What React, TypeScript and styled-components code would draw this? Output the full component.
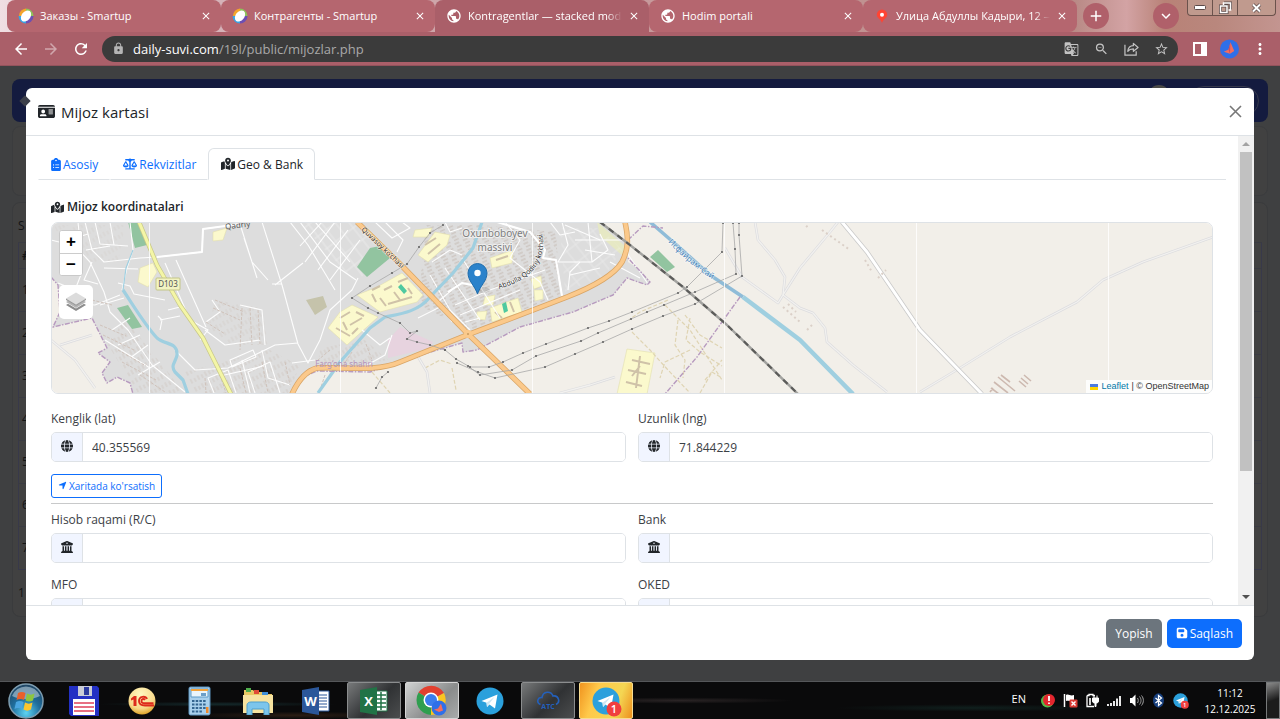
import React from "react";
import styled, { createGlobalStyle, css } from "styled-components";
import {
  FaIdCard,
  FaClipboardList,
  FaScaleBalanced,
  FaMapLocationDot,
  FaGlobe,
  FaBuildingColumns,
  FaLocationArrow,
  FaFloppyDisk,
} from "react-icons/fa6";
import {
  MdArrowBack,
  MdArrowForward,
  MdRefresh,
  MdLock,
  MdGTranslate,
  MdZoomOut,
  MdStarBorder,
  MdMoreVert,
  MdPublic,
  MdClose,
  MdAdd,
  MdExpandMore,
} from "react-icons/md";

const GlobalStyle = createGlobalStyle`
  * { box-sizing: border-box; }
  html, body { margin: 0; padding: 0; }
  body {
    font-family: "Open Sans", "Noto Sans", sans-serif;
    font-size: 12px;
    color: #212529;
    overflow: hidden;
  }
  button, input { font-family: inherit; }
`;

const Screen = styled.div`
  display: flex;
  flex-direction: column;
  height: 100vh;
  background: #404142;
`;

/* ---------- browser chrome ---------- */

const TabStrip = styled.div`
  display: flex;
  align-items: stretch;
  height: 32px;
  padding-left: 7px;
  background: linear-gradient(90deg, #f0dfe3 0, #d9b9c0 8%, #c79a9c 50%, #b98a86 84%, #d3a3a4 88%, #b88277 91%, #b9877d 95%, #c39590 100%);
`;

const BrowserTab = styled.div<{ $active?: boolean }>`
  display: flex;
  align-items: center;
  gap: 6px;
  flex: 0 1 214px;
  min-width: 0;
  padding: 0 9px 0 11px;
  border-radius: ${(p) => (p.$active ? "8px 8px 0 0" : "8px")};
  background: ${(p) => (p.$active ? "#aa5f69" : "#b5666f")};
  color: #fff;
`;

const TabTitle = styled.span<{ $fade?: boolean }>`
  flex: 1;
  min-width: 0;
  overflow: hidden;
  white-space: nowrap;
  font-size: 11px;
  line-height: 16px;
  ${(p) =>
    p.$fade &&
    css`
      mask-image: linear-gradient(90deg, #000 90%, transparent 100%);
    `}
`;

const GlyphButton = styled.button`
  display: flex;
  align-items: center;
  justify-content: center;
  padding: 0;
  border: 0;
  background: none;
  color: inherit;
  font-size: 12px;
`;

const RoundButton = styled(GlyphButton)`
  width: 26px;
  height: 26px;
  margin: 3px 0 0 6px;
  border-radius: 50%;
  background: #b0606a;
  color: #fff;
  font-size: 18px;
`;

const StripEnd = styled.div`
  display: flex;
  flex: 1;
  justify-content: flex-end;
  gap: 8px;
  padding-right: 4px;
`;

const WindowControls = styled.div`
  display: grid;
  grid-template-columns: 24px 25px 38px;
  height: 16px;
  border: 1px solid #6b524c;
  border-top: 0;
  border-radius: 0 0 4px 4px;
  background: #c09a8e;
  overflow: hidden;
  button + button { border-left: 1px solid #6b524c; }
`;

const Toolbar = styled.div`
  display: flex;
  align-items: center;
  height: 34px;
  padding: 0 11px 0 12px;
  background: #aa5f69;
  border-bottom: 1px solid #93535c;
`;

const NavButton = styled(GlyphButton)<{ $dim?: boolean }>`
  width: 18px;
  margin-right: 12px;
  font-size: 18px;
  color: #fff;
  opacity: ${(p) => (p.$dim ? 0.45 : 1)};
`;

const Omnibox = styled.div`
  display: flex;
  align-items: center;
  flex: 1;
  height: 26px;
  padding: 0 9px 0 10px;
  border-radius: 13px;
  background: #3b3b3b;
  color: #b4b4b4;
`;

const UrlText = styled.span`
  flex: 1;
  margin-left: 8px;
  color: #a9a9a9;
  font-size: 13px;
  line-height: 18px;
  b { font-weight: 400; color: #fff; }
`;

const OmniActions = styled.div`
  display: flex;
  gap: 15px;
  color: #c3c3c3;
  button { font-size: 16px; width: 15px; }
`;

const ToolbarEnd = styled.div`
  display: flex;
  align-items: center;
  gap: 11px;
  margin-left: 12px;
  color: #fff;
  button { font-size: 18px; width: 19px; }
`;

/* ---------- page below the dialog ---------- */

const Viewport = styled.main`
  display: grid;
  grid-template: minmax(0, 1fr) / minmax(0, 1fr);
  flex: 1;
  min-height: 0;
  > * { grid-area: 1 / 1; }
`;

const Underlay = styled.div`
  padding: 13px 12px 0;
  overflow: hidden;
  background: #3f4041;
  color: #131415;
`;

const Navbar = styled.div`
  display: flex;
  justify-content: flex-end;
  align-items: center;
  gap: 19px;
  height: 43px;
  padding: 0 9px;
  border-radius: 8px;
  background: #141b3f;
`;

const NavMark = styled.i`
  width: 8px;
  height: 8px;
  margin-right: auto;
  background: #3c3f4a;
  transform: rotate(45deg);
`;

const NavAvatar = styled.i`
  width: 22px;
  height: 32px;
  border-radius: 11px;
  background: #4a4a48;
`;

const NavPill = styled.i`
  width: 70px;
  height: 30px;
  border: 1px solid #35384c;
  border-radius: 15px;
`;

const FilterCard = styled.div`
  height: 70px;
  margin-top: 4px;
  border: 1px solid #3b3c3e;
  border-radius: 8px;
  background: #414141;
`;

const ListCard = styled.div`
  margin-top: 6px;
  padding: 14px 5px;
  border: 1px solid #3a3b3d;
  border-radius: 8px;
  background: #414141;
  line-height: 18px;
`;

const ListTable = styled.table`
  width: 100%;
  margin: 7px 0 14px;
  border-collapse: collapse;
  border: 1px solid #38394a;
  th, td {
    height: 43px;
    padding: 0 0 0 3px;
    border-top: 1px solid #3a3b42;
    text-align: left;
    font-size: 12px;
  }
  th { height: 26px; }
`;

/* ---------- dialog ---------- */

const Dialog = styled.section`
  display: flex;
  flex-direction: column;
  min-height: 0;
  margin: 22px 26px 21px;
  border-radius: 6px;
  background: #fff;
  overflow: hidden;
`;

const DialogHeader = styled.header`
  display: flex;
  align-items: center;
  justify-content: space-between;
  flex: none;
  height: 48px;
  padding: 0 12px;
  border-bottom: 1px solid #dee2e6;
`;

const DialogTitle = styled.h1`
  display: flex;
  align-items: center;
  gap: 6px;
  margin: 0;
  font-size: 15px;
  line-height: 20px;
  font-weight: 400;
  svg { font-size: 17px; }
`;

const CloseButton = styled(GlyphButton)`
  width: 13px;
  height: 13px;
  color: #777;
`;

const DialogBody = styled.div`
  display: flex;
  flex: 1;
  min-height: 0;
`;

const ScrollArea = styled.div`
  flex: 1;
  min-width: 0;
  padding: 12px 12px 0;
  overflow-y: auto;
  scrollbar-width: none;
`;

const ScrollTrack = styled.div`
  display: flex;
  flex-direction: column;
  align-items: center;
  width: 16px;
  background: #f1f1f1;
`;

const ScrollArrow = styled.i<{ $down?: boolean }>`
  display: flex;
  align-items: center;
  justify-content: center;
  flex: none;
  height: 16px;
  &::before {
    content: "";
    border: 4px solid transparent;
    border-top-width: ${(p) => (p.$down ? "4px" : "0")};
    border-bottom-width: ${(p) => (p.$down ? "0" : "4px")};
    border-${(p) => (p.$down ? "top" : "bottom")}-color: ${(p) => (p.$down ? "#505050" : "#a3a3a3")};
  }
`;

const ScrollRail = styled.div`
  flex: 1;
  width: 12px;
  &::before {
    content: "";
    display: block;
    height: 73%;
    background: #c1c1c1;
  }
`;

const Tabs = styled.div`
  display: flex;
  height: 32px;
  border-bottom: 1px solid #dee2e6;
`;

const TabButton = styled.button<{ $active?: boolean }>`
  display: flex;
  align-items: center;
  gap: 2px;
  height: 32px;
  padding: 0 11px 0 12px;
  border: 1px solid ${(p) => (p.$active ? "#dee2e6" : "transparent")};
  border-bottom-color: ${(p) => (p.$active ? "#fff" : "#dee2e6")};
  border-radius: 6px 6px 0 0;
  background: #fff;
  color: ${(p) => (p.$active ? "#212529" : "#0d6efd")};
  font-size: 12px;
`;

const ClipboardIcon = styled(FaClipboardList)`
  width: 10px;
  height: 13px;
`;

const Pane = styled.div`
  padding: 18px 13px 24px;
`;

const SectionTitle = styled.h2`
  display: flex;
  align-items: center;
  gap: 3px;
  margin: 0 0 6px;
  font-size: 12px;
  line-height: 18px;
  font-weight: 600;
`;

const MapBox = styled.div`
  display: grid;
  height: 172px;
  border: 1px solid #dee2e6;
  border-radius: 7px;
  overflow: hidden;
  > * { grid-area: 1 / 1; }
`;

const MapCanvas = styled.svg`
  display: block;
  width: 100%;
  height: 170px;
  text { font-family: "Noto Sans", sans-serif; }
`;

const MapControls = styled.div`
  position: relative;
  display: flex;
  flex-direction: column;
  align-items: flex-start;
  align-self: start;
  justify-self: start;
  gap: 9px;
  padding: 7px;
`;

const ZoomGroup = styled.div`
  display: flex;
  flex-direction: column;
  border: 1px solid #c9c9c9;
  border-radius: 3px;
  background: #fff;
  overflow: hidden;
`;

const ZoomButton = styled.button`
  width: 22px;
  height: 22px;
  padding: 0;
  border: 0;
  background: #fff;
  color: #000;
  font: 700 17px/22px "Liberation Sans", sans-serif;
  & + & { border-top: 1px solid #ccc; }
`;

const LayersButton = styled(GlyphButton)`
  width: 34px;
  height: 34px;
  border-radius: 5px;
  background: #fff;
`;

const Attribution = styled.div`
  position: relative;
  display: flex;
  align-items: center;
  gap: 3px;
  align-self: end;
  justify-self: end;
  height: 13px;
  padding: 0 3px 0 4px;
  background: rgba(255, 255, 255, 0.85);
  color: #333;
  font: 9px/13px "Liberation Sans", sans-serif;
  a { color: #0078a8; text-decoration: none; }
`;

const FieldGrid = styled.div<{ $top: number }>`
  display: grid;
  grid-template-columns: 1fr 1fr;
  gap: 14px 12px;
  margin-top: ${(p) => p.$top}px;
`;

const FieldLabel = styled.label`
  display: block;
  margin-bottom: 5px;
  font-size: 12px;
  line-height: 16px;
  color: #3c4146;
`;

const InputGroup = styled.div`
  display: flex;
  height: 30px;
  border: 1px solid #dee2e6;
  border-radius: 5px;
  overflow: hidden;
`;

const Addon = styled.span`
  display: flex;
  align-items: center;
  justify-content: center;
  width: 31px;
  padding-bottom: 3px;
  border-right: 1px solid #dee2e6;
  background: #f1f5ff;
`;

const TextInput = styled.input`
  flex: 1;
  min-width: 0;
  padding: 1px 9px 0;
  border: 0;
  outline: 0;
  background: #fff;
  color: #3c4146;
  font-size: 12px;
`;

const OutlineButton = styled.button`
  display: flex;
  align-items: center;
  gap: 2px;
  height: 24px;
  margin-top: 12px;
  padding: 0 6px 1px;
  border: 1px solid #0d6efd;
  border-radius: 3px;
  background: #fff;
  color: #0d6efd;
  font-size: 10px;
`;

const Divider = styled.hr`
  height: 1px;
  margin: 5px 0 0;
  border: 0;
  background: #c8c9ca;
`;

const DialogFooter = styled.footer`
  display: flex;
  align-items: center;
  justify-content: flex-end;
  gap: 5px;
  flex: none;
  height: 55px;
  padding: 0 12px;
  border-top: 1px solid #dee2e6;
`;

const SolidButton = styled.button<{ $primary?: boolean }>`
  display: flex;
  align-items: center;
  gap: 2px;
  height: 29px;
  padding: 0 9px;
  border: 0;
  border-radius: 5px;
  background: ${(p) => (p.$primary ? "#0d6efd" : "#6c757d")};
  color: #fff;
  font-size: 12px;
`;

/* ---------- taskbar ---------- */

const Taskbar = styled.nav`
  display: flex;
  align-items: stretch;
  flex: none;
  height: 38px;
  border-top: 1px solid #55575a;
  background:
    radial-gradient(ellipse at 17% 60%, #14292b 0, transparent 8%),
    radial-gradient(ellipse at 23% 90%, #2b1d14 0, transparent 8%),
    radial-gradient(ellipse at 53% 50%, #2a2425 0, transparent 12%),
    radial-gradient(ellipse at 76% 70%, #10201e 0, transparent 10%),
    #0a0a0b;
  color: #fff;
`;

const StartButton = styled(GlyphButton)`
  width: 52px;
`;

const AppButtons = styled.div`
  display: flex;
  gap: 4px;
  flex: 1;
  margin-left: 5px;
`;

const appTones = {
  none: "background: none; border-color: transparent;",
  open: "background: linear-gradient(135deg, #77797a, #303234 55%, #4b4d4e);",
  active: "background: linear-gradient(135deg, #d0d2d2, #8a8c8c 60%, #a9abab); border-color: #d5d5d5;",
  alert: "background: linear-gradient(110deg, #f0941f, #ffc94a 30%, #f4d653 70%, #ee8f1c); border-color: #f6dc92;",
};

const AppButton = styled(GlyphButton)<{ $tone: keyof typeof appTones }>`
  width: 54px;
  border: 1px solid #8b8d8e;
  border-radius: 2px;
  ${(p) => appTones[p.$tone]}
`;

const Tray = styled.div`
  display: flex;
  align-items: center;
  gap: 7px;
`;

const Language = styled.span`
  margin-right: 8px;
  padding-bottom: 5px;
  font-size: 11px;
`;

const Clock = styled.time`
  width: 62px;
  margin-left: 4px;
  text-align: center;
  font-size: 10px;
  line-height: 16px;
`;

const ShowDesktop = styled.button`
  width: 14px;
  margin-left: 5px;
  padding: 0;
  border: 1px solid #77797a;
  background: linear-gradient(160deg, #8a8a8a, #1c1c1c 50%);
`;

/* ---------- drawings ---------- */

const SmartupIcon = () => (
  <svg width="16" height="16" viewBox="0 0 16 16">
    <path d="M1 8A7.500 7.500 0 0 1 8 .5L8 8Z" fill="#f3a52b" />
    <path d="M8 .5A7.500 7.500 0 0 1 15.500 8L8 8Z" fill="#8cc35a" />
    <path d="M15.500 8A7.500 7.500 0 0 1 8 15.500L8 8Z" fill="#6d4fb3" />
    <path d="M8 15.500A7.500 7.500 0 0 1 .5 8L8 8Z" fill="#39a3e3" />
    <ellipse cx="8" cy="8" rx="4.400" ry="6.200" transform="rotate(38 8 8)" fill="#fff" />
  </svg>
);

const PinIcon = () => (
  <svg width="16" height="16" viewBox="0 0 16 16">
    <path d="M8 1.500a5.200 5.200 0 0 1 5.200 5.200c0 3.500-4.200 4.300-5.200 8.300-1-4-5.200-4.800-5.200-8.300A5.200 5.200 0 0 1 8 1.500Z" fill="#f43" />
    <circle cx="8" cy="6.700" r="2" fill="#fff" />
  </svg>
);

const ShareIcon = () => (
  <svg width="15" height="15" viewBox="0 0 16 16" fill="none" stroke="#c3c3c3" strokeWidth="1.300">
    <path d="M1 4v11h12v-4" />
    <path d="M4 11c.5-4 3-6 6-6V2.500L15 7l-5 4V8.500C7.500 8.500 5.500 9 4 11Z" strokeLinejoin="round" />
  </svg>
);

const SidePanelIcon = () => (
  <svg width="14" height="14" viewBox="0 0 14 14">
    <path d="M0 0h14v14H0Z" fill="#fff" />
    <path d="M2 2h6v10H2Z" fill="#aa5f69" />
  </svg>
);

const ProfileIcon = ({ size = 20 }: { size?: number }) => (
  <svg width={size} height={size} viewBox="0 0 20 20">
    <circle cx="10" cy="10" r="10" fill="#2f6fe8" />
    <path d="M11 3 15 12 10.500 15 4 13 9 10.500Z" fill="#f26d5f" />
    <path d="M11 3 9 10.500 10.500 15Z" fill="#c94e63" />
  </svg>
);

const LayersIcon = () => (
  <svg width="22" height="22" viewBox="0 0 22 22">
    <path d="m1 14 10 6 10-6-2-1.200-8 4.700-8-4.700Z" fill="#8d8d8d" />
    <path d="m1 11 10 6 10-6-2-1.200-8 4.700-8-4.700Z" fill="#b5b5b5" />
    <path d="m1 7.500 10-6 10 6-10 6Z" fill="#dcdcdc" />
    <path d="m1 7.500 10 6 10-6v1.500l-10 6-10-6Z" fill="#9c9c9c" />
  </svg>
);

const WindowsOrb = () => (
  <svg width="36" height="36" viewBox="0 0 36 36">
    <defs>
      <radialGradient id="orb" cx="50%" cy="85%" r="85%">
        <stop offset="0" stopColor="#5ed3f3" />
        <stop offset=".5" stopColor="#1f6d9c" />
        <stop offset="1" stopColor="#20425f" />
      </radialGradient>
    </defs>
    <circle cx="18" cy="18" r="17" fill="url(#orb)" stroke="#7e9db0" strokeWidth="1.500" />
    <path d="M4 13a15 15 0 0 1 28 0C25 17 11 17 4 13Z" fill="#c8dbe6" opacity=".55" />
    <path d="M10 10c2.500-1.500 5-1.500 7.500 0L16 17c-2.500-1.500-5-1.300-7.500 0Z" fill="#e8602c" />
    <path d="M19 10.500c2.500 1.500 5 1.500 7.500 0L25 17.500c-2.500 1.300-5 1.300-7.500 0Z" fill="#8cc63f" />
    <path d="M8 19c2.500-1.300 5-1.300 7.500 0L14 26c-2.500-1.300-5-1.300-7.500 0Z" fill="#4aa5e0" />
    <path d="M17 19.500c2.500 1.500 5 1.500 7.500 0L23 26.500c-2.500 1.500-5 1.500-7.500 0Z" fill="#fcc62e" />
  </svg>
);

const FloppyApp = () => (
  <svg width="30" height="30" viewBox="0 0 30 30">
    <path d="M0 0h28l2 2v28H2l-2-2Z" fill="#2330c4" />
    <path d="M9 0h14v10H9Z" fill="#c9ccd6" />
    <path d="M15 1h5v8h-5Z" fill="#2b3a9e" />
    <path d="M4 13h22v16H4Z" fill="#fff" />
    <path d="M5 17h20M5 21h20M5 25h20" stroke="#e0405a" strokeWidth="1.300" />
  </svg>
);

const OneCApp = () => (
  <svg width="28" height="28" viewBox="0 0 28 28">
    <defs>
      <radialGradient id="onec" cx="45%" cy="25%" r="75%">
        <stop offset="0" stopColor="#fff7c0" />
        <stop offset=".7" stopColor="#f8d98a" />
        <stop offset="1" stopColor="#e0a52a" />
      </radialGradient>
    </defs>
    <circle cx="14" cy="14" r="13.500" fill="url(#onec)" />
    <path d="M3 11.500 6 9h2.500v10H5.500v-6.500L3 13.500Z" fill="#dd2b1c" />
    <path d="M19 12c-1.500-3.500-8-3-8 2 0 4 3 4.500 6 4.500h9M17 13c-1-1.500-3.500-1.500-3.500 1s2 2.200 4 2.200h8" fill="none" stroke="#dd2b1c" strokeWidth="1.900" />
  </svg>
);

const CalculatorApp = () => (
  <svg width="24" height="30" viewBox="0 0 24 30">
    <rect x="1" y="1" width="21" height="28" rx="1.500" fill="#a9d0ec" stroke="#5a92bd" />
    <path d="M3 3h17v8H3Z" fill="#e9f5fc" stroke="#5d9ac7" />
    <path d="M3 3h17v2H3Z" fill="#f2a23b" />
    <path d="M13 7h5v3h-5Z" fill="#6c9fc8" />
    <path d="M4 15h14M4 18.500h14M4 22h14M4 25.500h10" stroke="#33648f" strokeWidth="2" strokeDasharray="2.500 1.200" />
    <path d="M18 21h2.500v6H18Z" fill="#ef8a2c" />
  </svg>
);

const ExplorerApp = () => (
  <svg width="32" height="28" viewBox="0 0 32 28">
    <path d="M2 3h9l2 2h9l2 2h6v19H2Z" fill="#e9c964" />
    <path d="M4 1h5v4H4Z" fill="#4fae4c" />
    <path d="M12 3h5v4h-5Z" fill="#e04b36" />
    <path d="M20 5h6v3h-6Z" fill="#3f8fd8" />
    <path d="M1 8h30v18H1Z" fill="#f7e3a0" />
    <path d="M5 28V18c0-2 2-3 4-3h14c2 0 4 1 4 3v10h-5v-6H10v6Z" fill="#7cc5ec" stroke="#4d9fce" />
  </svg>
);

const OfficeApp = ({ letter, color, grid }: { letter: string; color: string; grid?: boolean }) => (
  <svg width="28" height="28" viewBox="0 0 28 28">
    <path d="M15 4h12v20H15Z" fill="#fff" stroke={color} />
    {grid ? (
      <path d="M16 8h10M16 12h10M16 16h10M16 20h10M21 5v18" stroke={color} strokeWidth="1.500" />
    ) : (
      <path d="M16 8h9M16 11h9M16 14h9M16 17h9M16 20h9" stroke={color} strokeWidth="1.200" />
    )}
    <path d="M0 3 17 0v28L0 25Z" fill={color} />
    <text x="8.500" y="18.500" textAnchor="middle" fontSize="13" fontWeight="700" fill="#fff">
      {letter}
    </text>
  </svg>
);

const ChromeApp = () => (
  <svg width="34" height="34" viewBox="0 0 34 34">
    <path d="M16 16 3.500 8.500A15 15 0 0 1 29 9Z" fill="#e2402f" />
    <path d="M16 16 29 9a15 15 0 0 1-13 22Z" fill="#fbc520" />
    <path d="M16 16v15A15 15 0 0 1 3.500 8.500Z" fill="#2f9e4f" />
    <circle cx="16" cy="16" r="7.500" fill="#fff" />
    <circle cx="16" cy="16" r="6" fill="#3b7ded" />
    <circle cx="24" cy="24" r="7.500" fill="#2f6fe8" />
    <path d="m26 19.500 2 7-4 1.500-5-2.500 4-1Z" fill="#f26d5f" />
  </svg>
);

const TelegramApp = ({ size = 28, badge }: { size?: number; badge?: boolean }) => (
  <svg width={size} height={size} viewBox="0 0 28 28" overflow="visible">
    <circle cx="14" cy="14" r="13.500" fill="#2ba0dc" />
    <path d="M5.500 14 21.500 7.500 19 21.500 13.500 17.500 11 20 10.500 15.800Z" fill="#fff" />
    <path d="m10.500 15.800 8-5.800-5.300 6.800L11 20Z" fill="#cfe6f3" />
    {badge && <circle cx="22" cy="22" r="7.500" fill="#f03e3e" />}
    {badge && (
      <text x="22" y="26" textAnchor="middle" fontSize="11" fontWeight="600" fill="#fff">
        1
      </text>
    )}
  </svg>
);

const CloudApp = () => (
  <svg width="24" height="22" viewBox="0 0 24 22" fill="none" stroke="#2460ba" strokeWidth="1.600">
    <path d="M4.500 14.500c-4.500-1.500-3-7.500 1.500-7C7 1 15 .5 17 6c6-1 7.500 6.500 3 8.500" />
    <text x="12" y="19" textAnchor="middle" fontSize="7" fontWeight="700" fill="#2460ba" stroke="none">
      ATC
    </text>
  </svg>
);

const TrayAlert = () => (
  <svg width="15" height="15" viewBox="0 0 15 15">
    <circle cx="6.500" cy="8" r="6.500" fill="#56b947" />
    <circle cx="8" cy="7" r="6" fill="#e3262e" />
    <path d="M8 3v5M8 9.500V11" stroke="#fff" strokeWidth="1.800" />
  </svg>
);

const TrayFlag = () => (
  <svg width="15" height="15" viewBox="0 0 15 15">
    <path d="M1.500 1v13" stroke="#fff" strokeWidth="1.500" />
    <path d="M3 2c3-1.500 4 1.500 8 0v6c-4 1.500-5-1-8 0Z" fill="#fff" />
    <rect x="6.500" y="6.500" width="8" height="8" rx="1" fill="#d93a33" />
    <path d="m8.500 8.500 4 4m0-4-4 4" stroke="#fff" strokeWidth="1.400" />
  </svg>
);

const TrayPower = () => (
  <svg width="15" height="15" viewBox="0 0 15 15">
    <path d="M2 2.500h2v-1h4v1h2M2 2.500v11h7" fill="none" stroke="#fff" strokeWidth="1.300" />
    <path d="M4 5h2v7H4Z" fill="#cfcfcf" />
    <path d="M7.500 5h6v3c0 1.500-1 2-2.500 2v3.500H10V10C8.500 10 7.500 9.500 7.500 8ZM9 2.500V5m3-2.500V5" fill="#fff" stroke="#fff" />
  </svg>
);

const TraySignal = () => (
  <svg width="15" height="15" viewBox="0 0 15 15">
    <path d="M1 11v2M4 10v3M7 8v5M10 5.500V13M13 3v10" stroke="#fff" strokeWidth="1.800" />
  </svg>
);

const TraySound = () => (
  <svg width="15" height="15" viewBox="0 0 15 15">
    <path d="M1 5h2l3.500-3.500v12L3 10H1Z" fill="#fff" />
    <path d="M8.500 5c1 1.500 1 3.500 0 5M10.500 3.500c2 2.500 2 5.500 0 8M12.500 2.500c2.500 3 2.500 7 0 10" fill="none" stroke="#a5a5a5" />
  </svg>
);

const TrayBluetooth = () => (
  <svg width="15" height="15" viewBox="0 0 15 15">
    <ellipse cx="7.500" cy="7.500" rx="5.500" ry="7.200" fill="#173f7d" />
    <path d="m4.500 5 6 5L7.500 12.500v-10l3 2.500-6 5" fill="none" stroke="#fff" strokeWidth="1.200" />
  </svg>
);

/* ---------- street map ---------- */

const streets = [
  "M51 240 75 246 90 262 104 292 110 312 128 330 152 365 185 392",
  "M85 222 92 250 104 262 140 258 157 257 202 252 203 229 240 224",
  "M130 222 133 250 127 268 122 290",
  "M104 268 138 269M118 283 130 286 134 294 165 300",
  "M120 295 95 305 60 303M60 262 82 272 75 290 58 283",
  "M60 232 75 238 88 234M95 222 100 244 128 246M78 222 80 242M64 246 60 262",
  "M86 250 110 246M110 222 114 245M92 262 84 280 98 284M100 305 124 298",
  "M165 263 190 320 208 330 200 340M176 260 206 327",
  "M240 224 257 278M244 238 252 262 268 280",
  "M262 222 282 285 298 344 308 363 320 340 330 310 352 290 358 278",
  "M275 285 303 263M272 284 282 284",
  "M290 222 308 245 335 290M300 222 330 262 356 280M315 222 350 262",
  "M335 222 305 262M348 230 318 270M360 240 330 280M322 222 300 246",
  "M160 320 180 316M160 330 162 320 158 316M168 310 184 306",
  "M175 350 195 370 228 368 275 345 298 343M230 360 253 350 256 357 232 367Z",
  "M214 393 208 378 228 370 236 393M255 393 248 372 270 362 280 393",
  "M292 363 315 360M262 350 268 378 290 385M242 360 250 393M220 376 264 366",
  "M205 330 225 345 260 340M212 300 220 312 206 322M240 305 262 310 265 345",
  "M385 222 403 240 397 252M375 222 392 238 410 228 402 222",
  "M445 222 450 232 462 228M432 262 450 250 462 255",
  "M448 292 462 283 482 287M452 290 440 300 436 304",
  "M497 222 530 232 545 250 543 258 556 260 562 296",
  "M505 222 520 240 510 258 540 282 548 300",
  "M430 275 450 310 470 330M445 268 480 320M462 258 500 318M418 318 442 306 452 322",
  "M455 305 490 290 545 270M460 315 520 290M465 322 480 318",
  "M562 222 568 245 558 262 592 262 608 250M592 262 588 222M608 250 600 234",
  "M568 290 570 272 580 262M570 275 600 268M585 250 615 255M575 240 622 240",
  "M565 225 600 240M550 222 560 235 575 232",
  "M625 250 648 284M610 262 640 278",
  "M392 335 385 355 362 368M362 330 380 345 390 338",
  "M112 330 130 318M118 345 140 335M130 358 148 345M105 340 150 368M138 375 160 362",
];

const houseRows = [
  "M215 300 244 312M213 308 240 320M206 322 225 334M242 308 240 350M250 308 252 345M258 310 260 344",
  "M205 378 206 393M220 375 226 393M240 368 246 393M262 362 268 393M285 362 290 385",
  "M100 325 126 336M103 335 134 350M118 350 146 366M122 362 156 380M140 375 165 392M92 300 112 305",
  "M325 375 320 390M330 350 318 360M352 352 344 364M366 344 372 360M346 372 352 366",
];

const farmTracks = [
  "M632 332 650 350 668 370 690 393M678 320 675 345 685 360 683 378",
  "M685 315 700 335 722 348M690 318 686 340 700 352 722 366M668 300 640 312 629 320",
  "M665 305 690 330 722 380M705 380 722 360M700 393 712 372 722 378M690 350 665 362 660 378",
  "M425 368 440 360 452 364M372 372 390 393M452 368 456 390",
];

const powerLines: [number, number][][] = [
  [[723, 223], [722, 252], [687, 287], [678, 293], [632, 312], [609, 321], [588, 328], [546, 344], [523, 353], [503, 362], [489, 367], [470, 367], [456, 359], [445, 350]],
  [[733, 223], [735, 249], [736, 274], [695, 292], [664, 305], [647, 312], [631, 319], [598, 333], [581, 341], [536, 356], [512, 370], [480, 375], [468, 366]],
  [[739, 223], [739, 235], [742, 276], [695, 304], [663, 316], [632, 329], [603, 342], [575, 354], [545, 367], [495, 378], [478, 372], [457, 363]],
  [[443, 225], [430, 233], [419, 247], [407, 264], [392, 273], [370, 286], [352, 298], [368, 308], [378, 313], [400, 323], [410, 333], [417, 331], [407, 339], [417, 342], [430, 345], [445, 350]],
  [[388, 372], [382, 377], [376, 388]],
];

const campuses = [
  "377,287 402,273 423,295 417,302 380,312 357,295",
  "340,312 352,305 378,317 347,345 328,328",
  "435,232 450,235 447,245 428,262 418,255",
  "415,230 432,228 428,237 413,237",
  "490,258 513,250 512,263 492,268",
  "485,297 495,295 493,305 483,305",
  "490,308 518,298 522,312 492,322",
  "531,279 541,276 542,286 534,289",
  "534,290 543,290 543,299 535,301",
  "477,312 487,311 485,320 477,319",
  "140,268 153,263 157,272 148,287 138,282",
  "213,232 227,228 223,240 213,241",
  "627,349 655,353 647,394 617,394",
];

const parks = [
  "128,222 140,222 147,245 135,248",
  "117,308 128,305 142,327 132,329",
  "357,267 370,248 380,246 390,258 367,277",
  "650,257 658,250 675,267 667,272",
];

const orangeRoads = [
  "M292 394 Q302 372 317 368 C340 366 375 373 400 362 L467 335 520 315 567 297 C600 284 616 272 622 262 C628 250 629 240 625 222",
  "M357 222 403 267 435 300 467 333 493 358 530 394",
];

const ruralRoads = [
  "M838 222 830 232 800 268 783 295",
  "M755 222 758 240 775 260 785 277 783 295 778 303 742 277 725 248",
  "M783 295 800 308 813 313 825 328 827 342 853 365 887 392",
  "M920 392 960 368 1010 337 1077 302 1103 280 1143 262 1213 237",
  "M417 355 427 372 430 393M560 393 590 385 615 377M51 340 75 360 95 388M60 345 92 335",
];

const tileSeams = [149, 340, 532, 724, 916, 1108];

const CityMap = () => (
  <MapCanvas viewBox="52 223 1160 170" preserveAspectRatio="xMidYMid slice" aria-label="Xarita">
    <defs>
      <pattern id="houses" width="9" height="7" patternUnits="userSpaceOnUse" patternTransform="rotate(-24)">
        <path d="M1 2h5M2 5.500h5" stroke="#cdc6c1" strokeWidth="1.300" />
      </pattern>
      <pattern id="lanes" width="15" height="11" patternUnits="userSpaceOnUse" patternTransform="rotate(52)">
        <path d="M0 5h15M7 0v11" stroke="#f6f6f6" strokeWidth="1" />
      </pattern>
      <pattern id="plots" width="9" height="8" patternUnits="userSpaceOnUse" patternTransform="rotate(62)">
        <path d="M1 2h5M2 6h4" stroke="#d2cbc6" strokeWidth="1" />
      </pattern>
      <path id="quvasoy" d="M361 230 405 272" />
      <path id="qodiriy" d="M499 289 C530 280 550 262 541 228" />
      <path id="sai" d="M668 242 Q692 268 722 285" />
    </defs>
    <path d="M51 222h1162v172H51Z" fill="#f2efe9" />
    <path
      d="M51 222H600L628 245 628 262 640 270 650 282 647 285 627 278 613 295 573 312 520 327 477 350 463 352 462 343 420 355 397 364 370 371 317 369 305 375 292 394H133L130 383 117 377 107 383 102 373 110 362 98 353 107 348 92 318 53 327 60 312 58 285 51 277Z"
      fill="#dddddd"
    />
    <path d="M597 222 625 246 624 257 600 236Z" fill="#e6e8c4" />
    <path d="M388 340 400 327 433 342 430 348 388 358Z" fill="#e7d3df" />
    <path d="M306 300 323 296 327 307 315 315Z" fill="#c5c3ab" />
    <path d="M426 225 480 225 556 232 560 296 470 330 418 305Z" fill="url(#houses)" />
    <path d="M300 223 352 223 395 250 355 282Z" fill="url(#lanes)" opacity=".5" />
    <path d="M560 228 600 228 622 250 605 276 565 292Z" fill="url(#lanes)" opacity=".4" />
    <path d="M108 345 125 318 150 350 185 393 138 393Z" fill="url(#plots)" />
    <path d="M185 372 270 350 300 366 288 393 195 393Z" fill="url(#plots)" />
    <path d="M54 225 125 225 118 262 70 262Z" fill="url(#plots)" opacity=".5" />
    <path d="M215 300 262 308 268 345 232 345 208 328Z" fill="url(#plots)" opacity=".7" />
    <path d="M320 348 365 340 388 360 350 366 318 364Z" fill="url(#plots)" />
    {campuses.map((points) => (
      <polygon key={points} points={points} fill="#fbf9cd" stroke="#e3dfae" strokeWidth=".6" />
    ))}
    <path d="M384 290 392 286M398 282 408 278M372 294 376 302M388 304 412 297M372 290 380 286M380 298 386 306M394 292 400 300M408 288 412 294M340 318 350 312M350 325 362 318M336 328 350 336M356 312 364 316M343 322 347 330M352 334 358 328M632 360 650 364M628 370 646 374M626 382 642 386M640 356 636 388M632 376 640 366M495 312 502 318M510 302 514 312M425 245 436 238M428 254 440 244M496 260 508 256" stroke="#cfc2a8" strokeWidth="2" fill="none" />
    {parks.map((points) => (
      <polygon key={points} points={points} fill="#92c4a0" />
    ))}
    <path d="m398 287 3-3 6 7-3 3ZM502 304l4-2 2 9-4 2Z" fill="#4fc9a0" />
    <g fill="none" strokeLinejoin="round">
      <g stroke="#fdfdfd" strokeWidth="1.100">
        {streets.map((d) => (
          <path key={d} d={d} />
        ))}
      </g>
      <path d="M157 257 202 252 203 229 240 224M497 222 530 232 545 250 543 258 556 260 562 296M448 292 462 283 482 287" stroke="#fff" strokeWidth="2" />
      <g stroke="#cfc2ba" strokeWidth="1" strokeDasharray="3 1.500">
        {houseRows.map((d) => (
          <path key={d} d={d} />
        ))}
      </g>
      <g stroke="#dfd4b3" strokeWidth="1.200" strokeDasharray="4 2">
        {farmTracks.map((d) => (
          <path key={d} d={d} />
        ))}
      </g>
      <g stroke="#dcdcdf" strokeWidth="2.600">
        {ruralRoads.map((d) => (
          <path key={d} d={d} />
        ))}
      </g>
      <g stroke="#f2f1ef" strokeWidth="1.300">
        {ruralRoads.map((d) => (
          <path key={d} d={d} />
        ))}
      </g>
      <path d="M842 222 867 252 920 330 982 394" stroke="#c9c9c9" strokeWidth="4.500" />
      <path d="M842 222 867 252 920 330 982 394" stroke="#fff" strokeWidth="3" />
      <g stroke="#9fcfe0">
        <path d="M123 290C135 308 145 325 157 338 165 345 178 342 177 355 176 362 170 365 175 372L183 380 188 394" strokeWidth="3.200" />
        <path d="M133 250 126 268 123 290" strokeWidth="1.200" />
        <path d="M482 222 473 248 453 273 430 297C418 312 400 314 385 317L370 328 340 362 318 393" strokeWidth="3.200" />
        <path d="M650 222 680 248 710 275 743 297" strokeWidth="3.500" stroke="#8fbcd8" />
        <path d="M743 297 800 340 853 394" strokeWidth="4.500" />
      </g>
      <g stroke="#b79abf" strokeWidth="1.400" strokeDasharray="5 1.500 1.500 1.500">
        <path d="M51 277 58 285 60 312 53 327 92 318 107 348 98 353 110 362 102 373 107 383 117 377 130 383 133 394" />
        <path d="M292 394 305 376 317 371 370 372 420 355 462 343 463 352 477 350 520 327 573 312 613 295 627 278 647 285 650 282 628 258M628 240 643 226 663 228" />
        <path d="M740 297 722 322 697 357 665 394" />
      </g>
      <path d="M139 222 157 265 180 305 203 338 231 394" stroke="#c9c88a" strokeWidth="4.500" />
      <path d="M139 222 157 265 180 305 203 338 231 394" stroke="#f4f6a6" strokeWidth="3" />
      {orangeRoads.map((d) => (
        <path key={d} d={d} stroke="#d9a566" strokeWidth="5.500" />
      ))}
      {orangeRoads.map((d) => (
        <path key={d} d={d} stroke="#fbc98b" strokeWidth="4" />
      ))}
      <circle cx="468" cy="334" r="4" fill="#fbc98b" />
      <circle cx="468" cy="334" r="1" fill="#c99a5c" />
      <path d="M600 222 630 245 683 287 727 325 798 394" stroke="#a3a3a0" strokeWidth="2.400" />
      <path d="M600 222 630 245 683 287 727 325 798 394" stroke="#5c5c5a" strokeWidth="2.200" strokeDasharray="6 5" />
      {powerLines.map((line) => (
        <polyline key={line.join()} points={line.join(" ")} stroke="#a8a8a8" strokeWidth=".8" />
      ))}
    </g>
    {powerLines.flat().map(([x, y], i) => (
      <circle key={i} cx={x} cy={y} r="1.100" fill="#666" />
    ))}
    <path d="m991 388 8 6M994 382l14 11M998 377l17 14M1001 375l9 7M1019 381l7 6M1021 378l7 6M1024 375l7 6M990 392l3-4" stroke="#cdb9b0" strokeWidth="1.600" fill="none" />
    <path d="M783 307 800 322M788 304 796 312M812 325 805 332M822 230 850 250M865 260 872 272M878 278 886 270M806 227 810 224" stroke="#dbd0c8" strokeWidth="2" strokeDasharray="2 3" fill="none" />
    <g stroke="#fff" strokeWidth="1" opacity=".8">
      {tileSeams.map((x) => (
        <path key={x} d={`M${x + 0.5} 222v172`} />
      ))}
    </g>
    <rect x="156" y="278" width="24" height="12" rx="1" fill="#f2f3c2" stroke="#c3c587" />
    <g textAnchor="middle" fill="#565656">
      <text x="168" y="287" fontSize="8">D103</text>
      <text x="238" y="228" fontSize="8" transform="rotate(-7 238 228)">Qadriy</text>
      <g fontSize="10" fill="#7d7d7d" stroke="#efefef" strokeWidth="2" paintOrder="stroke">
        <text x="495" y="237">Oxunboboyev</text>
        <text x="495" y="251">massivi</text>
      </g>
      <text x="344" y="367" fontSize="8" fill="#b493bb">Farg‘ona shahri</text>
    </g>
    <g fontSize="7" fill="#333" stroke="#fff" strokeOpacity=".5" strokeWidth="1.500" paintOrder="stroke">
      <text><textPath href="#quvasoy">Quvasoy ko‘chasi</textPath></text>
      <text><textPath href="#qodiriy">Abdulla Qodiriy ko‘chasi</textPath></text>
      <text fill="#4b86bb" fontSize="8"><textPath href="#sai">Исфайрам-Сай</textPath></text>
    </g>
    <ellipse cx="483" cy="290" rx="7" ry="3" fill="#000" opacity=".12" />
    <path d="M477.500 294C475 286 468 281 468 273a9.500 9.500 0 0 1 19 0c0 8-7 13-9.500 21Z" fill="#2b82cb" stroke="#1f6cab" />
    <circle cx="477.500" cy="273" r="3.200" fill="#fff" />
  </MapCanvas>
);

/* ---------- assembled screen ---------- */

const browserTabs = [
  { title: "Заказы - Smartup", icon: <SmartupIcon /> },
  { title: "Контрагенты - Smartup", icon: <SmartupIcon /> },
  { title: "Kontragentlar — stacked modal", icon: <MdPublic size={16} />, active: true, fade: true },
  { title: "Hodim portali", icon: <MdPublic size={16} /> },
  { title: "Улица Абдуллы Кадыри, 12 —", icon: <PinIcon />, fade: true },
];

type FieldProps = { id: string; label: string; icon: React.ReactNode; value?: string };

const Field = ({ id, label, icon, value = "" }: FieldProps) => (
  <div>
    <FieldLabel htmlFor={id}>{label}</FieldLabel>
    <InputGroup>
      <Addon>{icon}</Addon>
      <TextInput id={id} defaultValue={value} />
    </InputGroup>
  </div>
);

export default function App() {
  return (
    <Screen>
      <GlobalStyle />
      <TabStrip>
        {browserTabs.map((tab) => (
          <BrowserTab key={tab.title} $active={tab.active}>
            {tab.icon}
            <TabTitle $fade={tab.fade}>{tab.title}</TabTitle>
            <GlyphButton aria-label="Close tab"><MdClose /></GlyphButton>
          </BrowserTab>
        ))}
        <RoundButton aria-label="New tab"><MdAdd /></RoundButton>
        <StripEnd>
          <RoundButton aria-label="Search tabs"><MdExpandMore /></RoundButton>
          <WindowControls>
            <GlyphButton aria-label="Minimize">
              <svg width="12" height="5" viewBox="0 0 12 5"><rect x=".5" y=".5" width="11" height="4" rx="1" fill="#fff" stroke="#5b4a49" /></svg>
            </GlyphButton>
            <GlyphButton aria-label="Restore">
              <svg width="13" height="13" viewBox="0 0 13 13" fill="none">
                <path d="M5 2h6.500v6.500M1.500 5H8v6.500H1.500Z" stroke="#5b4a49" strokeWidth="3" />
                <path d="M4.500 4V2h7v7h-2M1.500 5H8v6.500H1.500Z" stroke="#fff" strokeWidth="1.500" />
              </svg>
            </GlyphButton>
            <GlyphButton aria-label="Close">
              <svg width="11" height="10" viewBox="0 0 11 10">
                <path d="m2 1.500 7 7m0-7-7 7" stroke="#5b4a49" strokeWidth="3.500" />
                <path d="m2 1.500 7 7m0-7-7 7" stroke="#fff" strokeWidth="2" />
              </svg>
            </GlyphButton>
          </WindowControls>
        </StripEnd>
      </TabStrip>
      <Toolbar>
        <NavButton aria-label="Back"><MdArrowBack /></NavButton>
        <NavButton aria-label="Forward" $dim><MdArrowForward /></NavButton>
        <NavButton aria-label="Reload"><MdRefresh /></NavButton>
        <Omnibox>
          <MdLock size={13} />
          <UrlText><b>daily-suvi.com</b>/19l/public/mijozlar.php</UrlText>
          <OmniActions>
            <GlyphButton aria-label="Translate"><MdGTranslate /></GlyphButton>
            <GlyphButton aria-label="Zoom"><MdZoomOut /></GlyphButton>
            <GlyphButton aria-label="Share"><ShareIcon /></GlyphButton>
            <GlyphButton aria-label="Bookmark"><MdStarBorder /></GlyphButton>
          </OmniActions>
        </Omnibox>
        <ToolbarEnd>
          <GlyphButton aria-label="Side panel"><SidePanelIcon /></GlyphButton>
          <GlyphButton aria-label="Profile"><ProfileIcon /></GlyphButton>
          <GlyphButton aria-label="Menu"><MdMoreVert /></GlyphButton>
        </ToolbarEnd>
      </Toolbar>

      <Viewport>
        <Underlay aria-hidden="true">
          <Navbar><NavMark /><NavAvatar /><NavPill /></Navbar>
          <FilterCard />
          <ListCard>
            S
            <ListTable>
              <thead><tr><th>#</th></tr></thead>
              <tbody>
                {[1, 2, 3, 4, 5, 6, 7].map((n) => (
                  <tr key={n}><td>{n}</td></tr>
                ))}
              </tbody>
            </ListTable>
            1
          </ListCard>
        </Underlay>

        <Dialog role="dialog" aria-labelledby="dialog-title">
          <DialogHeader>
            <DialogTitle id="dialog-title"><FaIdCard />Mijoz kartasi</DialogTitle>
            <CloseButton aria-label="Close">
              <svg width="13" height="13" viewBox="0 0 13 13"><path d="m1 1 11 11M12 1 1 12" stroke="currentColor" strokeWidth="1.600" /></svg>
            </CloseButton>
          </DialogHeader>
          <DialogBody>
            <ScrollArea>
              <Tabs role="tablist">
                <TabButton role="tab"><ClipboardIcon />Asosiy</TabButton>
                <TabButton role="tab"><FaScaleBalanced size={14} />Rekvizitlar</TabButton>
                <TabButton role="tab" aria-selected="true" $active><FaMapLocationDot size={14} />Geo &amp; Bank</TabButton>
              </Tabs>
              <Pane>
                <SectionTitle><FaMapLocationDot size={13} />Mijoz koordinatalari</SectionTitle>
                <MapBox>
                  <CityMap />
                  <MapControls>
                    <ZoomGroup>
                      <ZoomButton aria-label="Zoom in">+</ZoomButton>
                      <ZoomButton aria-label="Zoom out">−</ZoomButton>
                    </ZoomGroup>
                    <LayersButton aria-label="Layers"><LayersIcon /></LayersButton>
                  </MapControls>
                  <Attribution>
                    <svg width="8" height="6" viewBox="0 0 8 6"><path d="M0 0h8v3H0Z" fill="#4c7be1" /><path d="M0 3h8v3H0Z" fill="#ffd500" /></svg>
                    <a href="#leaflet">Leaflet</a>
                    <span>| © OpenStreetMap</span>
                  </Attribution>
                </MapBox>
                <FieldGrid $top={17}>
                  <Field id="lat" label="Kenglik (lat)" icon={<FaGlobe />} value="40.355569" />
                  <Field id="lng" label="Uzunlik (lng)" icon={<FaGlobe />} value="71.844229" />
                </FieldGrid>
                <OutlineButton><FaLocationArrow size={9} />Xaritada ko'rsatish</OutlineButton>
                <Divider />
                <FieldGrid $top={8}>
                  <Field id="account" label="Hisob raqami (R/C)" icon={<FaBuildingColumns />} />
                  <Field id="bank" label="Bank" icon={<FaBuildingColumns />} />
                  <Field id="mfo" label="MFO" icon={<FaBuildingColumns />} />
                  <Field id="oked" label="OKED" icon={<FaBuildingColumns />} />
                </FieldGrid>
              </Pane>
            </ScrollArea>
            <ScrollTrack aria-hidden="true">
              <ScrollArrow />
              <ScrollRail />
              <ScrollArrow $down />
            </ScrollTrack>
          </DialogBody>
          <DialogFooter>
            <SolidButton>Yopish</SolidButton>
            <SolidButton $primary><FaFloppyDisk />Saqlash</SolidButton>
          </DialogFooter>
        </Dialog>
      </Viewport>

      <Taskbar>
        <StartButton aria-label="Start"><WindowsOrb /></StartButton>
        <AppButtons>
          <AppButton $tone="none" aria-label="Total Commander"><FloppyApp /></AppButton>
          <AppButton $tone="none" aria-label="1C"><OneCApp /></AppButton>
          <AppButton $tone="none" aria-label="Calculator"><CalculatorApp /></AppButton>
          <AppButton $tone="none" aria-label="Explorer"><ExplorerApp /></AppButton>
          <AppButton $tone="none" aria-label="Word"><OfficeApp letter="W" color="#2b579a" /></AppButton>
          <AppButton $tone="open" aria-label="Excel"><OfficeApp letter="X" color="#217346" grid /></AppButton>
          <AppButton $tone="active" aria-label="Chrome"><ChromeApp /></AppButton>
          <AppButton $tone="none" aria-label="Telegram"><TelegramApp /></AppButton>
          <AppButton $tone="open" aria-label="ATC"><CloudApp /></AppButton>
          <AppButton $tone="alert" aria-label="Telegram messages"><TelegramApp badge /></AppButton>
        </AppButtons>
        <Tray>
          <Language>EN</Language>
          <TrayAlert />
          <TrayFlag />
          <TrayPower />
          <TraySignal />
          <TraySound />
          <TrayBluetooth />
          <TelegramApp size={15} badge />
          <Clock>11:12<br />12.12.2025</Clock>
        </Tray>
        <ShowDesktop aria-label="Show desktop" />
      </Taskbar>
    </Screen>
  );
}
